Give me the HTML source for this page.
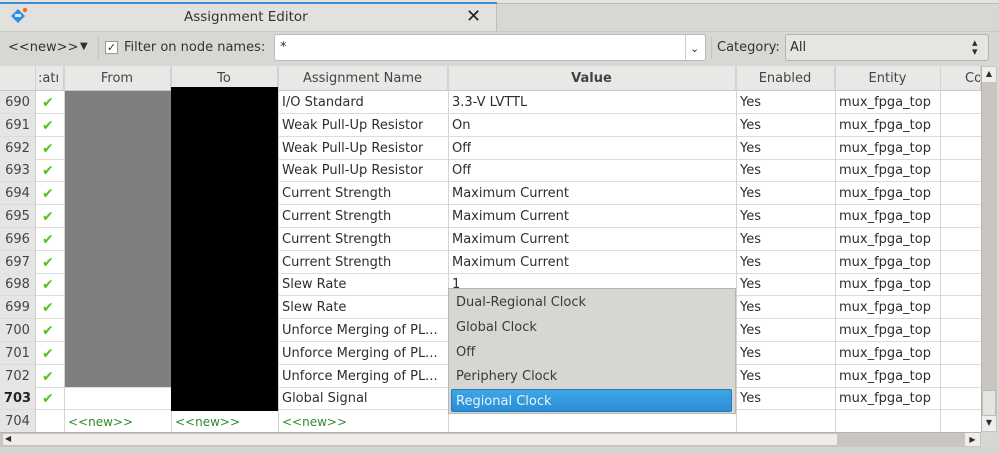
<!DOCTYPE html>
<html><head><meta charset="utf-8"><style>
*{box-sizing:border-box;margin:0;padding:0}
body{width:999px;height:454px;overflow:hidden;background:#d9d7d3;font-family:"DejaVu Sans","Liberation Sans",sans-serif;font-size:13px;color:#2e2e2e;position:relative}
.a{position:absolute}
.c{position:absolute;top:0;height:100%;line-height:24px;white-space:nowrap;overflow:hidden}
.row{position:absolute;left:0;width:981px;height:23px;border-bottom:1px solid #dcdcdc}
.num{left:0;width:36px;background:#e6e5e3;text-align:center;padding:0;color:#444;border-right:1px solid #cfcfcf}
.chk{left:36px;width:28px;color:#55c21e;font-size:14px;font-weight:bold;padding-left:6px}
.vl{position:absolute;top:66px;height:367px;width:1px;background:#d4d4d4}
.hd{position:absolute;top:66px;height:25px;line-height:25px;text-align:center;color:#444;background:#e9e8e6;border-right:1px solid #d0d0d0;border-bottom:1px solid #c8c8c8}
.g{color:#2e8a2e;font-size:12px}
</style></head><body>
<div class="a" style="left:0;top:0;width:999px;height:4px;background:#e4e3e0;border-bottom:1px solid #bdbbb8"></div>
<div class="a" style="left:0;top:2px;width:497px;height:2px;background:#3b8fd6"></div>
<div class="a" style="left:0;top:4px;width:497px;height:27px;background:#e2e1de;border-right:1px solid #c0beba"></div>
<svg class="a" style="left:9px;top:7px" width="20" height="18" viewBox="0 0 20 18"><path d="M2 9 L9 2 L16 9 L9 16 Z" fill="#2f8fe0"/><rect x="6" y="7" width="6" height="3" fill="#fff" opacity=".8"/><circle cx="16" cy="3" r="2.2" fill="#f06a2a"/></svg>
<div class="a" style="left:184px;top:9px;font-size:13.5px;color:#333">Assignment Editor</div>
<div class="a" style="left:466px;top:6px;font-size:18px;font-weight:bold;color:#222">✕</div>
<div class="a" style="left:0;top:31px;width:999px;height:1px;background:#c9c7c3"></div>
<div class="a" style="left:8px;top:40px;color:#333">&lt;&lt;new&gt;&gt;</div>
<div class="a" style="left:80px;top:41px;font-size:10px">▼</div>
<div class="a" style="left:98px;top:37px;width:1px;height:22px;background:#c6c4c0"></div>
<div class="a" style="left:105px;top:41px;width:13px;height:13px;border:1px solid #999;background:#fff;font-size:11px;line-height:11px;text-align:center;font-weight:bold">✓</div>
<div class="a" style="left:124px;top:40px;color:#333">Filter on node names:</div>
<div class="a" style="left:274px;top:34px;width:432px;height:27px;background:#fff;border:1px solid #bdbbb7;border-radius:3px"></div>
<div class="a" style="left:280px;top:40px">*</div>
<div class="a" style="left:685px;top:35px;width:1px;height:25px;background:#ccc"></div>
<div class="a" style="left:690px;top:42px;font-size:11px">⌄</div>
<div class="a" style="left:711px;top:37px;width:1px;height:22px;background:#c6c4c0"></div>
<div class="a" style="left:717px;top:40px;color:#333">Category:</div>
<div class="a" style="left:785px;top:34px;width:204px;height:27px;background:#e6e5e2;border:1px solid #b5b3af;border-radius:3px"></div>
<div class="a" style="left:790px;top:40px">All</div>
<div class="a" style="left:972px;top:38px;font-size:11px;line-height:9px">▴<br>▾</div>
<div class="a" style="left:0;top:66px;width:981px;height:367px;background:#fff"></div>
<div class="hd" style="left:0;width:36px"></div>
<div class="hd" style="left:36px;width:28px;text-align:left;padding-left:2px">:atı</div>
<div class="hd" style="left:64px;width:107px">From</div>
<div class="hd" style="left:171px;width:107px">To</div>
<div class="hd" style="left:278px;width:170px">Assignment Name</div>
<div class="hd" style="left:448px;width:288px;font-weight:bold">Value</div>
<div class="hd" style="left:736px;width:99px">Enabled</div>
<div class="hd" style="left:835px;width:106px">Entity</div>
<div class="hd" style="left:941px;width:40px;text-align:left;padding-left:24px;overflow:hidden">Co</div>
<div class="row" style="top:91px"><div class="c num">690</div><div class="c chk">✔</div><div class="c" style="left:282px">I/O Standard</div><div class="c" style="left:452px">3.3-V LVTTL</div><div class="c" style="left:740px">Yes</div><div class="c" style="left:839px">mux_fpga_top</div></div>
<div class="row" style="top:113.8px"><div class="c num">691</div><div class="c chk">✔</div><div class="c" style="left:282px">Weak Pull-Up Resistor</div><div class="c" style="left:452px">On</div><div class="c" style="left:740px">Yes</div><div class="c" style="left:839px">mux_fpga_top</div></div>
<div class="row" style="top:136.6px"><div class="c num">692</div><div class="c chk">✔</div><div class="c" style="left:282px">Weak Pull-Up Resistor</div><div class="c" style="left:452px">Off</div><div class="c" style="left:740px">Yes</div><div class="c" style="left:839px">mux_fpga_top</div></div>
<div class="row" style="top:159.4px"><div class="c num">693</div><div class="c chk">✔</div><div class="c" style="left:282px">Weak Pull-Up Resistor</div><div class="c" style="left:452px">Off</div><div class="c" style="left:740px">Yes</div><div class="c" style="left:839px">mux_fpga_top</div></div>
<div class="row" style="top:182.2px"><div class="c num">694</div><div class="c chk">✔</div><div class="c" style="left:282px">Current Strength</div><div class="c" style="left:452px">Maximum Current</div><div class="c" style="left:740px">Yes</div><div class="c" style="left:839px">mux_fpga_top</div></div>
<div class="row" style="top:205px"><div class="c num">695</div><div class="c chk">✔</div><div class="c" style="left:282px">Current Strength</div><div class="c" style="left:452px">Maximum Current</div><div class="c" style="left:740px">Yes</div><div class="c" style="left:839px">mux_fpga_top</div></div>
<div class="row" style="top:227.8px"><div class="c num">696</div><div class="c chk">✔</div><div class="c" style="left:282px">Current Strength</div><div class="c" style="left:452px">Maximum Current</div><div class="c" style="left:740px">Yes</div><div class="c" style="left:839px">mux_fpga_top</div></div>
<div class="row" style="top:250.6px"><div class="c num">697</div><div class="c chk">✔</div><div class="c" style="left:282px">Current Strength</div><div class="c" style="left:452px">Maximum Current</div><div class="c" style="left:740px">Yes</div><div class="c" style="left:839px">mux_fpga_top</div></div>
<div class="row" style="top:273.4px"><div class="c num">698</div><div class="c chk">✔</div><div class="c" style="left:282px">Slew Rate</div><div class="c" style="left:452px">1</div><div class="c" style="left:740px">Yes</div><div class="c" style="left:839px">mux_fpga_top</div></div>
<div class="row" style="top:296.2px"><div class="c num">699</div><div class="c chk">✔</div><div class="c" style="left:282px">Slew Rate</div><div class="c" style="left:740px">Yes</div><div class="c" style="left:839px">mux_fpga_top</div></div>
<div class="row" style="top:319px"><div class="c num">700</div><div class="c chk">✔</div><div class="c" style="left:282px">Unforce Merging of PL...</div><div class="c" style="left:740px">Yes</div><div class="c" style="left:839px">mux_fpga_top</div></div>
<div class="row" style="top:341.8px"><div class="c num">701</div><div class="c chk">✔</div><div class="c" style="left:282px">Unforce Merging of PL...</div><div class="c" style="left:740px">Yes</div><div class="c" style="left:839px">mux_fpga_top</div></div>
<div class="row" style="top:364.6px"><div class="c num">702</div><div class="c chk">✔</div><div class="c" style="left:282px">Unforce Merging of PL...</div><div class="c" style="left:740px">Yes</div><div class="c" style="left:839px">mux_fpga_top</div></div>
<div class="row" style="top:387.4px"><div class="c num" style="font-weight:bold;color:#222">703</div><div class="c chk">✔</div><div class="c" style="left:282px">Global Signal</div><div class="c" style="left:740px">Yes</div><div class="c" style="left:839px">mux_fpga_top</div></div>
<div class="row" style="top:410.2px"><div class="c num">704</div><div class="c g" style="left:68px">&lt;&lt;new&gt;&gt;</div><div class="c g" style="left:175px">&lt;&lt;new&gt;&gt;</div><div class="c g" style="left:282px">&lt;&lt;new&gt;&gt;</div></div>
<div class="vl" style="left:64px"></div><div class="vl" style="left:171px"></div><div class="vl" style="left:278px"></div><div class="vl" style="left:448px"></div><div class="vl" style="left:736px"></div><div class="vl" style="left:835px"></div><div class="vl" style="left:940px"></div>
<div class="a" style="left:65px;top:91px;width:106px;height:296px;background:#7f7f7f"></div>
<div class="a" style="left:171px;top:87px;width:107px;height:324px;background:#000"></div>
<div class="a" style="left:448px;top:288px;width:288px;height:126px;background:#d8d6d2;border:1px solid #b8b6b2"></div>
<div class="a" style="left:456px;top:295px;color:#3a3a3a">Dual-Regional Clock</div>
<div class="a" style="left:456px;top:320px;color:#3a3a3a">Global Clock</div>
<div class="a" style="left:456px;top:345px;color:#3a3a3a">Off</div>
<div class="a" style="left:456px;top:369px;color:#3a3a3a">Periphery Clock</div>
<div class="a" style="left:451px;top:389px;width:281px;height:23px;background:linear-gradient(#3ea6e6,#2a8ed4);border-radius:2px;border:1px solid #2478b8"></div>
<div class="a" style="left:456px;top:394px;color:#e8f4ff">Regional Clock</div>
<div class="a" style="left:981px;top:66px;width:16px;height:366px;background:#c9c5c0;border-left:1px solid #b5b1ac"></div>
<div class="a" style="left:982px;top:67px;width:14px;height:15px;background:#efeeec;font-size:8px;text-align:center;line-height:14px">▲</div>
<div class="a" style="left:982px;top:390px;width:14px;height:26px;background:#e6e4e1;border:1px solid #bbb"></div>
<div class="a" style="left:982px;top:416px;width:14px;height:15px;background:#efeeec;font-size:8px;text-align:center;line-height:14px">▼</div>
<div class="a" style="left:0;top:432px;width:981px;height:15px;background:#c9c5c0;border-top:1px solid #b5b1ac"></div>
<div class="a" style="left:2px;top:433px;width:836px;height:13px;background:#eeedeb;border:1px solid #c6c4c0;border-radius:2px"></div>
<div class="a" style="left:5px;top:434px;font-size:8px">◀</div>
<div class="a" style="left:965px;top:433px;width:15px;height:13px;background:#efeeec;font-size:8px;text-align:center;line-height:13px">▶</div>
<div class="a" style="left:0;top:447px;width:999px;height:7px;background:#d6d4d0"></div>
</body></html>
